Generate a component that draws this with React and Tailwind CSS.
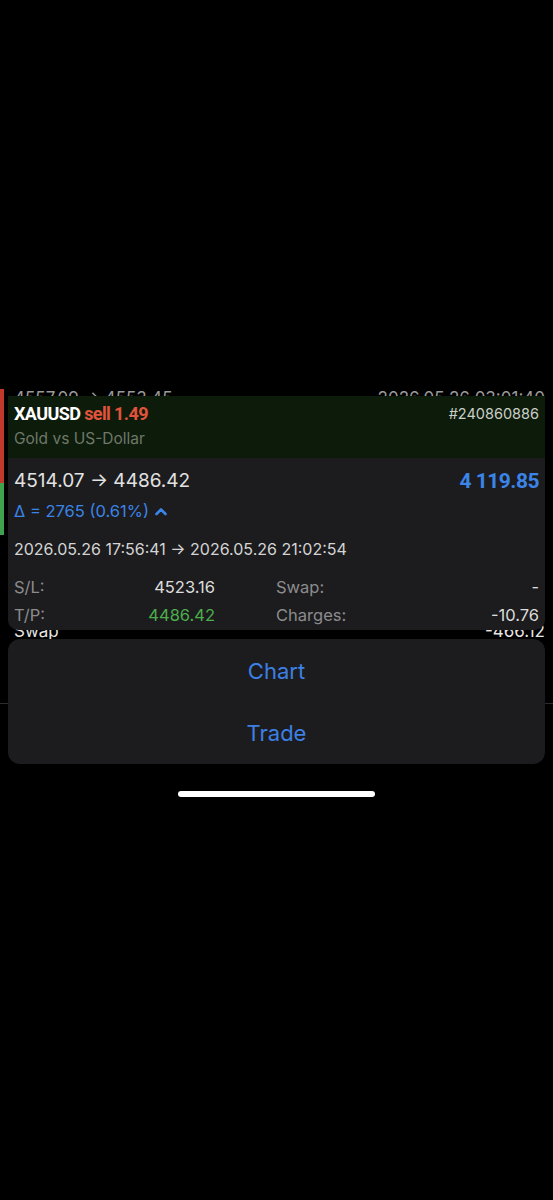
import React from "react";

const sans = { fontFamily: "Inter, 'Noto Sans', sans-serif" };
const cond = { fontFamily: "Roboto, 'Liberation Sans', sans-serif" };

function StatRow({ label, value, valueClass, label2, value2 }) {
  return (
    <div className="flex h-[28px] items-center text-[16.5px] leading-[22px]">
      <div className="flex w-[201px] justify-between">
        <span className="text-[#8c8c8e]">{label}</span>
        <span className={valueClass}>{value}</span>
      </div>
      <div className="ml-[61px] flex flex-1 justify-between">
        <span className="text-[#8c8c8e]">{label2}</span>
        <span className="text-[#dcdcdc]">{value2}</span>
      </div>
    </div>
  );
}

export default function App() {
  return (
    <div className="relative h-[1200px] w-full overflow-hidden bg-black" style={sans}>
      {/* list behind the popup */}
      <div className="flex pt-[381px]">
        <div className="flex w-[4px] flex-col">
          <div className="h-[8px]" />
          <div className="h-[94px] bg-[#c0392b]" />
          <div className="h-[52px] bg-[#3fa34d]" />
        </div>
        <div className="flex-1">
          <div className="flex h-[20px] justify-between pl-[10px] pr-[8px] pt-[6px] text-[17px] leading-[22px] text-[#9a9a9a]">
            <span>4557.09 → 4553.45</span>
            <span>2026.05.26 03:01:40</span>
          </div>
          <div className="h-[219px]" />
          <div className="flex h-[22px] justify-between pl-[10px] pr-[8px] text-[17px] leading-[22px] text-[#e5e5e5]">
            <span>Swap</span>
            <span>-466.12</span>
          </div>
          <div className="h-[61px]" />
        </div>
      </div>
      <div className="h-px w-full bg-[#2c2c2e]" />

      {/* popup */}
      <div className="absolute left-[8px] right-[8px] top-[396px]">
        <div className="overflow-hidden rounded-b-[10px] bg-[#1c1c1e]">
          <div className="h-[62px] bg-[#0d1b0b] px-[6px] pt-[7px]">
            <div className="flex justify-between">
              <div className="text-[18px] font-bold leading-[22px] tracking-[-0.6px]" style={cond}>
                <span className="text-white">XAUUSD </span>
                <span className="text-[#e2533b]">sell 1.49</span>
              </div>
              <div className="text-[14.5px] leading-[22px] text-[#c9cfc6]">#240860886</div>
            </div>
            <div className="mt-[4px] text-[15.5px] leading-[20px] text-[#6d786a]">Gold vs US-Dollar</div>
          </div>

          <div className="px-[6px] pb-[1px] pt-[11px]">
            <div className="flex justify-between">
              <div className="text-[19px] leading-[24px] text-[#e2e2e2]">4514.07 → 4486.42</div>
              <div className="text-[21px] font-bold leading-[24px] tracking-[-0.5px] text-[#3b84e8]" style={cond}>
                4 119.85
              </div>
            </div>
            <div className="mt-[8px] flex items-center gap-[6px] text-[16.5px] leading-[20px] text-[#3b84e8]">
              <span>Δ = 2765 (0.61%)</span>
              <svg width="12" height="9" viewBox="0 0 12 9" fill="none">
                <path d="M1.5 7 L6 2.5 L10.5 7" stroke="#3b84e8" strokeWidth="2.6" strokeLinecap="round" strokeLinejoin="round" />
              </svg>
            </div>
            <div className="mt-[18px] text-[16px] leading-[20px] text-[#d4d4d4]">
              2026.05.26 17:56:41 → 2026.05.26 21:02:54
            </div>
            <div className="mt-[14px]">
              <StatRow label="S/L:" value="4523.16" valueClass="text-[#dcdcdc]" label2="Swap:" value2="-" />
              <StatRow label="T/P:" value="4486.42" valueClass="text-[#4cae4c]" label2="Charges:" value2="-10.76" />
            </div>
          </div>
        </div>

        <div className="mt-[9px] flex flex-col rounded-[12px] bg-[#1c1c1e]">
          <button className="flex h-[64px] items-center justify-center text-[22px] text-[#3c80e4]">Chart</button>
          <button className="flex h-[61px] items-center justify-center text-[22px] text-[#3c80e4]">Trade</button>
        </div>

        <div className="mt-[27px] flex justify-center">
          <div className="h-[6px] w-[197px] rounded-full bg-white" />
        </div>
      </div>
    </div>
  );
}
